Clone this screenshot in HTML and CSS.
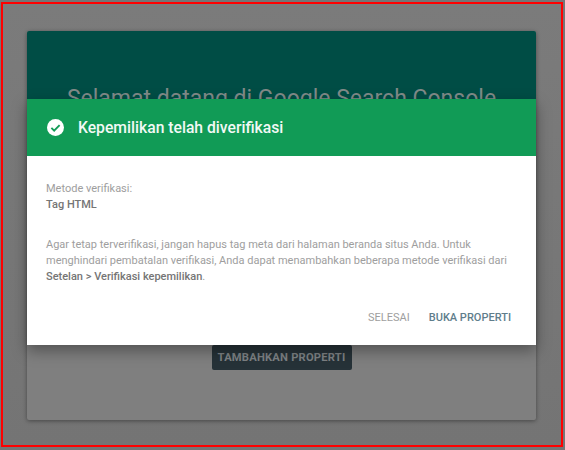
FILE: index.html
```html
<!DOCTYPE html>
<html lang="id">
<head>
<meta charset="utf-8">
<title>Kepemilikan telah diverifikasi</title>
<link rel="stylesheet" href="styles.css">
</head>
<body>
<div class="frame">
  <div class="card">
    <div class="hero">
      <h1 class="hero-title">Selamat datang di Google Search Console</h1>
    </div>
    <div class="card-body">
      <button class="add-btn">TAMBAHKAN PROPERTI</button>
    </div>
    <div class="dialog">
      <div class="dialog-head">
        <svg class="check" viewBox="0 0 24 24" width="17" height="17"><circle cx="12" cy="12" r="12" fill="#fff"/><path d="M6.2 12.6l3.9 3.9 7.7-8" fill="none" stroke="#129c57" stroke-width="2.6"/></svg>
        <span class="dialog-title">Kepemilikan telah diverifikasi</span>
      </div>
      <div class="dialog-content">
        <p class="method-label">Metode verifikasi:</p>
        <p class="method-value">Tag HTML</p>
        <p class="note">Agar tetap terverifikasi, jangan hapus tag meta dari halaman beranda situs Anda. Untuk menghindari pembatalan verifikasi, Anda dapat menambahkan beberapa metode verifikasi dari <b>Setelan &gt; Verifikasi kepemilikan</b>.</p>
      </div>
      <div class="dialog-actions">
        <span class="action">SELESAI</span>
        <span class="action primary">BUKA PROPERTI</span>
      </div>
    </div>
  </div>
</div>
</body>
</html>
```

FILE: styles.css
```css
html, body { margin: 0; height: 100%; }
body {
  background: #757575;
  font-family: Roboto, "Liberation Sans", sans-serif;
  overflow: hidden;
}
.frame {
  box-sizing: border-box;
  width: 562px;
  height: 445px;
  margin: 2px 0 0 1px;
  border: 2px solid #ff0000;
  padding: 27px 24px 0 24px;
  background: linear-gradient(#7b7b7b, #747474);
}
.card {
  position: relative;
  width: 509px;
  height: 389px;
  background: #7f7f7f;
  border-radius: 2px;
  box-shadow: 0 1px 4px rgba(0,0,0,.4);
  display: flex;
  flex-direction: column;
}
.hero {
  height: 120px;
  background: #004d45;
  border-radius: 2px 2px 0 0;
  display: flex;
  justify-content: center;
  padding-top: 54px;
  box-sizing: border-box;
}
.hero-title {
  margin: 0;
  font-size: 23px;
  line-height: 28px;
  font-weight: 400;
  color: #808a88;
  white-space: nowrap;
}
.card-body {
  flex: 1;
  display: flex;
  justify-content: center;
  align-items: flex-start;
  padding-top: 194px;
}
.add-btn {
  width: 140px;
  height: 25px;
  border: 0;
  padding: 0;
  background: #263238;
  color: #7e8285;
  border-radius: 2px;
  font: 700 11.2px Roboto, sans-serif;
  letter-spacing: .2px;
}
.dialog {
  position: absolute;
  left: 0;
  right: 0;
  top: 68px;
  height: 246px;
  background: #fff;
  box-shadow: 0 6px 14px rgba(0,0,0,.35);
  display: flex;
  flex-direction: column;
}
.dialog-head {
  height: 57px;
  background: #119b56;
  display: flex;
  align-items: center;
  padding-left: 20px;
  gap: 14px;
  flex: none;
}
.dialog-title {
  color: #f2f9f5;
  font-size: 15.7px;
  font-weight: 500;
}
.check { flex: none; }
.dialog-content {
  padding: 25px 19px 0;
  font-size: 11px;
  line-height: 16px;
  color: #9e9e9e;
  flex: 1;
}
.dialog-content p { margin: 0; }
.method-value { font-weight: 500; color: #757575; }
.note { margin-top: 24px !important; }
.note b { font-weight: 500; color: #757575; }
.dialog-actions {
  display: flex;
  justify-content: flex-end;
  gap: 19px;
  padding: 0 25px 20px 0;
  font-size: 11px;
  line-height: 14px;
}
.action { color: #9e9e9e; }
.primary { color: #607d8b; font-weight: 500; }
```
